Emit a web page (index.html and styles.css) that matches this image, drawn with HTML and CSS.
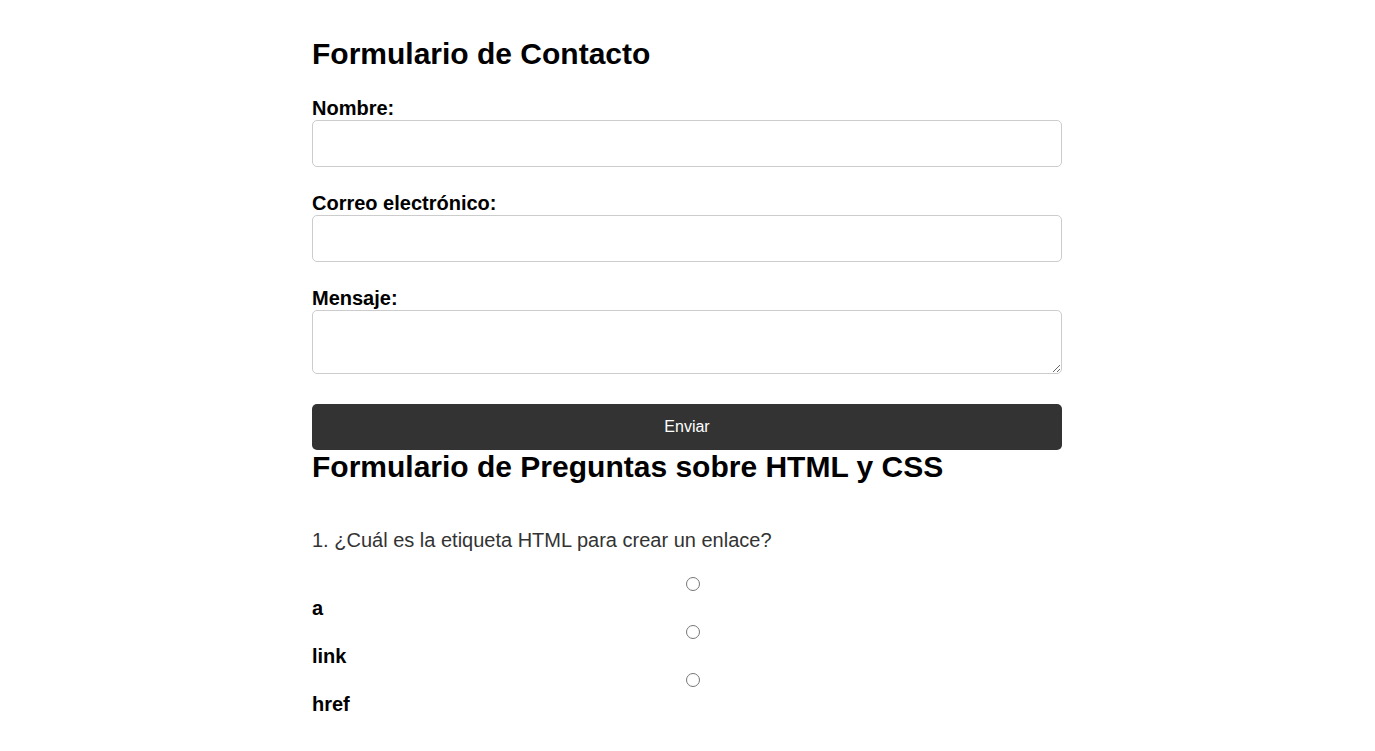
FILE: index.html
```html
<!DOCTYPE html>
<html lang="es">
<head>
<meta charset="utf-8">
<title>Formulario de Contacto</title>
<link rel="stylesheet" href="styles.css">
</head>
<body>
<div class="container">
  <h1 class="title">Formulario de Contacto</h1>
  <form class="contact">
    <label class="field-label" for="nombre">Nombre:</label>
    <input class="field" type="text" id="nombre">
    <label class="field-label" for="correo">Correo electrónico:</label>
    <input class="field" type="email" id="correo">
    <label class="field-label" for="mensaje">Mensaje:</label>
    <textarea class="field area" id="mensaje"></textarea>
    <button class="submit" type="button">Enviar</button>
  </form>
  <h2 class="title">Formulario de Preguntas sobre HTML y CSS</h2>
  <form class="quiz">
    <p class="question">1. ¿Cuál es la etiqueta HTML para crear un enlace?</p>
    <div class="option">
      <input class="radio" type="radio" name="q1" id="q1a">
      <label class="option-label" for="q1a">a</label>
    </div>
    <div class="option">
      <input class="radio" type="radio" name="q1" id="q1b">
      <label class="option-label" for="q1b">link</label>
    </div>
    <div class="option">
      <input class="radio" type="radio" name="q1" id="q1c">
      <label class="option-label" for="q1c">href</label>
    </div>
  </form>
</div>
</body>
</html>
```
FILE: styles.css
```css
html, body {
  margin: 0;
  padding: 0;
  background: #ffffff;
}

body {
  font-family: "Liberation Sans", Arial, Helvetica, sans-serif;
  color: #000;
  padding-right: 1px;
}

.container {
  width: 750px;
  margin: 0 auto;
  padding-top: 37px;
}

.title {
  font-size: 30px;
  font-weight: bold;
  margin: 0;
  line-height: 34.5px;
}

.contact {
  margin: 25px 0 0;
}

.field-label {
  display: block;
  font-size: 20px;
  font-weight: bold;
  line-height: 23px;
}

.field {
  display: block;
  width: 100%;
  box-sizing: border-box;
  height: 47px;
  margin: 0 0 25px;
  padding: 10px;
  border: 1px solid #cccccc;
  border-radius: 5px;
  font-family: inherit;
  font-size: 16px;
  background: #fff;
}

.area {
  height: 64px;
  margin-bottom: 30px;
  resize: both;
}

.submit {
  display: block;
  width: 100%;
  height: 46px;
  margin: 0;
  border: none;
  border-radius: 5px;
  background: #333333;
  color: #ffffff;
  font-family: inherit;
  font-size: 16px;
  cursor: pointer;
}

.quiz {
  margin: 0;
}

.question {
  margin: 45px 0 0;
  font-size: 20px;
  line-height: 23px;
  color: #333333;
}

.option {
  display: flex;
  flex-direction: column;
}

.radio {
  display: block;
  width: 100%;
  height: 14px;
  margin: 25px -6px 0 6px;
}

.option + .option .radio {
  margin-top: 5px;
}

.option-label {
  display: block;
  margin-top: 6px;
  font-size: 20px;
  font-weight: bold;
  line-height: 23px;
}
```
